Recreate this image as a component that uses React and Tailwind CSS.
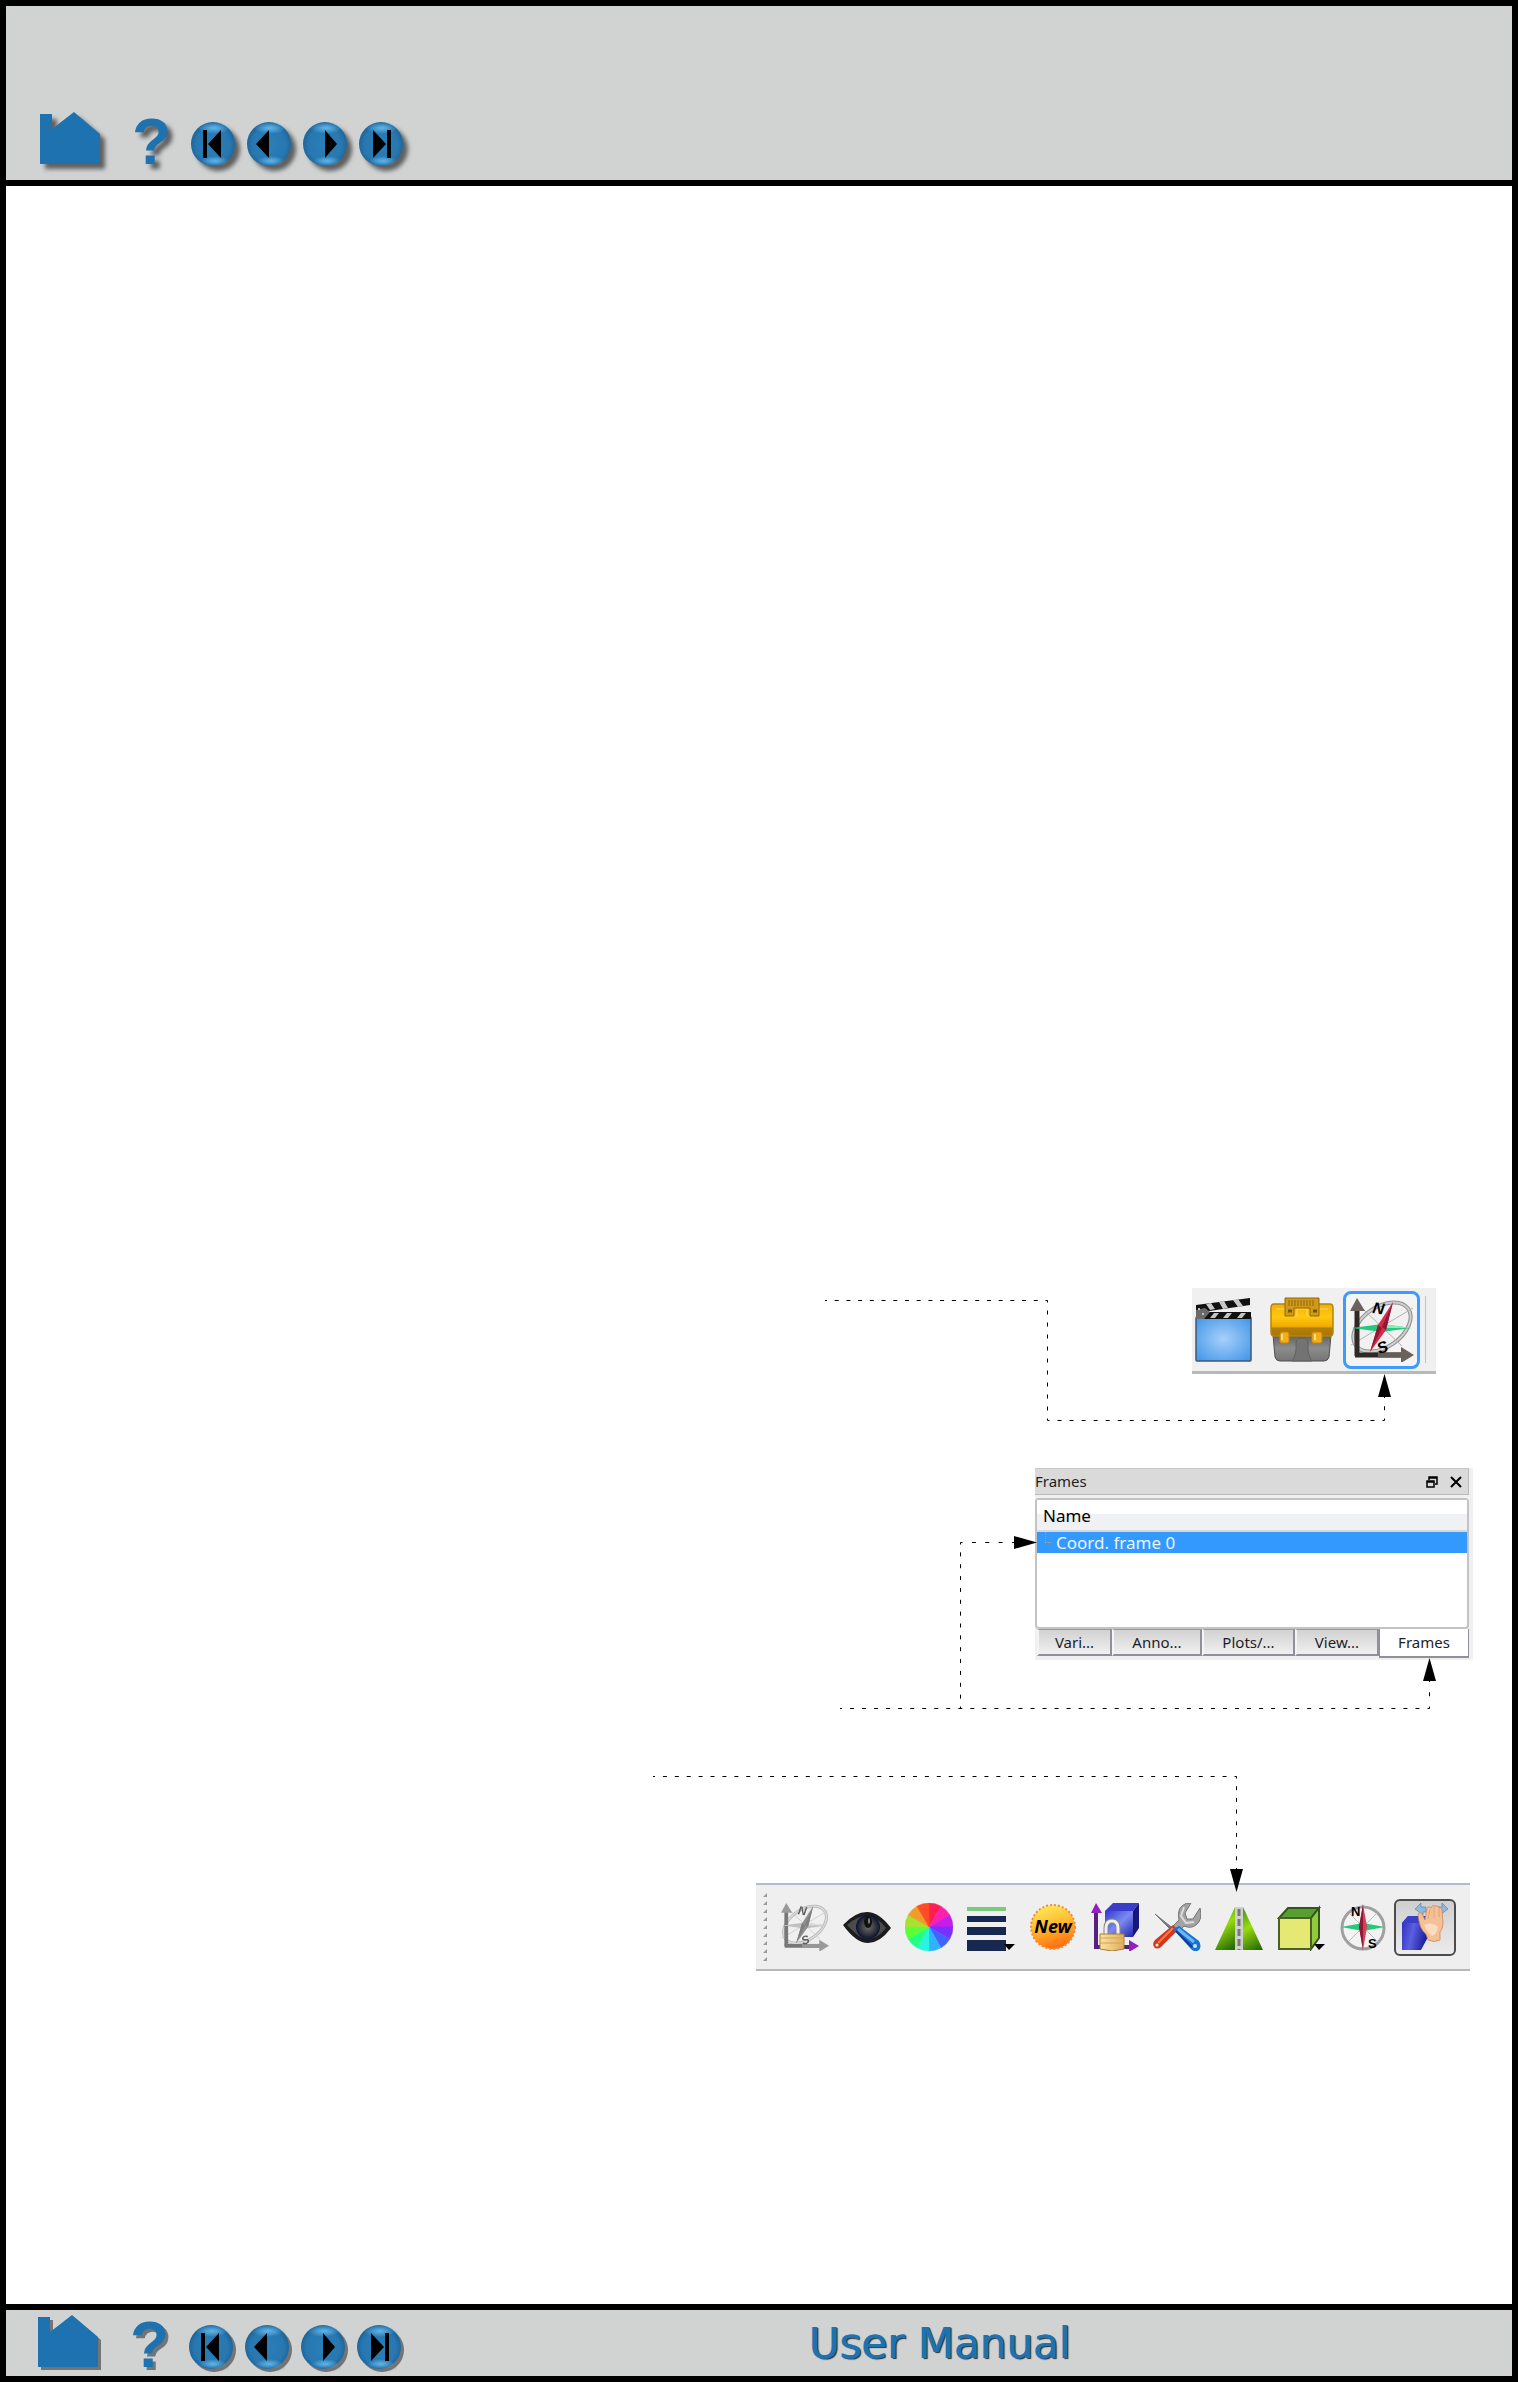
import React from 'react';

const HomeIcon = () => (
    <svg viewBox="0 0 60 52" className="w-[60px] h-[52px]">
        <path d="M0 2h12v15L34 0l26 22v30H0z" fill="#1f72b0" />
    </svg>
);

const glyphs = {
    first: <><path d="M12 9h4v28h-4z" /><path d="M30 9v28L17 23z" /></>,
    previous: <path d="M22 9v28L9 23z" />,
    next: <path d="M22 9v28l12-14z" />,
    last: <><path d="M14 9v28l13-14z" /><path d="M28 9h4v28h-4z" /></>,
};

const RoundIcon = ({ id, name }) => (
    <svg viewBox="0 0 44 44" className="w-11 h-11">
        <defs>
            <radialGradient id={id} cx="0.5" cy="0.52" r="0.55">
                <stop offset="0" stopColor="#2a7fb8" />
                <stop offset="0.7" stopColor="#2877b0" />
                <stop offset="1" stopColor="#1a5f94" />
            </radialGradient>
            <radialGradient id={`${id}-shine`}>
                <stop offset="0" stopColor="#63b6e8" />
                <stop offset="1" stopColor="#63b6e8" stopOpacity="0" />
            </radialGradient>
        </defs>
        <circle cx="22" cy="22" r="22" fill={`url(#${id})`} />
        <ellipse cx="23" cy="6" rx="16" ry="6" fill={`url(#${id}-shine)`} />
        <ellipse cx="24" cy="39" rx="14" ry="5" fill={`url(#${id}-shine)`} />
        <g transform="translate(0 -1)">{glyphs[name]}</g>
    </svg>
);

const PageNav = ({ id, shadow }) => (
    <nav aria-label={`${id} navigation`} className="flex items-end">
        <a href="#home" aria-label="Home" className={`mb-0.5 ${shadow}`}><HomeIcon /></a>
        <a href="#help" aria-label="Help" className={`ml-8 w-[59px] h-[52px] font-['Liberation_Sans',sans-serif] font-bold text-[64px] leading-[56px] text-[#1f72b0] ${shadow}`}>?</a>
        <div className="flex gap-3">
            {Object.keys(glyphs).map((name) => (
                <a key={name} href={`#${name}`} aria-label={`${name} page`} className={shadow}>
                    <RoundIcon id={`${id}-${name}`} name={name} />
                </a>
            ))}
        </div>
    </nav>
);

const ClapperIcon = () => (
    <svg viewBox="0 0 57 65" className="w-[57px] h-[65px]">
        <defs>
            <radialGradient id="clapper-body" cx="0.5" cy="0.5" r="0.65">
                <stop offset="0" stopColor="#a6d0fa" />
                <stop offset="1" stopColor="#4798e8" />
            </radialGradient>
        </defs>
        <rect x="1" y="20" width="55" height="44" rx="1" fill="url(#clapper-body)" stroke="#3c5878" strokeWidth="1.5" />
        <path d="M1 8L55 1v7L1 16z" fill="#111" />
        <path d="M11 7l5-1 4 6-5 1zM24 5l5-1 4 7-5 1zM38 3l5-1 5 7-5 1z" fill="#c8c8c8" />
        <path d="M1 15h55v7H1z" fill="#111" />
        <path d="M1 13l9-2 5 4-6 7H1z" fill="#6a6a6a" />
        <path d="M19 16h5l-4 5h-5zM32 16h5l-4 5h-5zM46 16h5l-4 5h-5z" fill="#c4c4c4" />
        <circle cx="4" cy="12" r="1" fill="#eee" />
        <circle cx="8" cy="17" r="1" fill="#ddd" />
    </svg>
);

const ToolboxIcon = () => (
    <svg viewBox="0 0 64 65" className="w-16 h-[65px]">
        <defs>
            <linearGradient id="toolbox-lid" x2="0" y2="1">
                <stop offset="0" stopColor="#f0b008" />
                <stop offset="0.4" stopColor="#ffc812" />
                <stop offset="0.7" stopColor="#f2ac00" />
                <stop offset="0.75" stopColor="#b47f05" />
                <stop offset="1" stopColor="#a87704" />
            </linearGradient>
            <linearGradient id="toolbox-base" x2="0" y2="1">
                <stop offset="0" stopColor="#5f5f5f" />
                <stop offset="0.5" stopColor="#8c8c8c" />
                <stop offset="1" stopColor="#757575" />
            </linearGradient>
        </defs>
        <path d="M3 38h58l-2 22q-1 4-5 4H10q-4 0-5-4z" fill="url(#toolbox-base)" stroke="#4f4f4f" />
        <path d="M22 64q5-6 4-18 0-5 6-5t6 5q-1 12 4 18z" fill="#737373" stroke="#606060" />
        <path d="M4 7h56q3 0 3 4v24q0 4-3 4H4q-3 0-3-4V11q0-4 3-4z" fill="url(#toolbox-lid)" stroke="#b88308" strokeWidth="1.5" />
        <path d="M6 12h13v7h8v-7h10v7h8v-7h13" fill="none" stroke="#ffd95a" strokeWidth="1" />
        <path d="M15 1h34v18h-9v-8H24v8h-9z" fill="#d09a18" stroke="#936609" />
        <path d="M19 3v6M22 3v6M25 3v6M28 3v6M31 3v6M34 3v6M37 3v6M40 3v6M43 3v6" stroke="#8a6412" strokeWidth="1" />
        <path d="M18 14h4M43 14h4" stroke="#765207" strokeWidth="3" />
        <rect x="10" y="35" width="9" height="11" rx="2" fill="#f4ad18" stroke="#c98706" />
        <rect x="42" y="35" width="10" height="11" rx="2" fill="#f4ad18" stroke="#c98706" />
        <path d="M12 37v6M45 37v6" stroke="#ffe08a" strokeWidth="2" />
    </svg>
);

const CoordFrameIcon = ({ className }) => (
    <svg viewBox="0 0 64 64" className={className}>
        <g transform="rotate(-35 32 29)">
            <ellipse cx="32" cy="29" rx="32" ry="20" fill="#f1f1f1" stroke="#8f8f8f" strokeWidth="4" />
            <ellipse cx="32" cy="29" rx="32" ry="20" fill="none" stroke="#cfcfcf" strokeWidth="2" />
        </g>
        <path d="M1 47L63 10M14 12l38 36" stroke="#b2b2b2" />
        <path d="M7 58V10" stroke="#2e2926" strokeWidth="5" />
        <path d="M7 0l8 13H0z" fill="#6a625b" />
        <path d="M5 57h50" stroke="#2e2926" strokeWidth="5" />
        <path d="M28 57h24" stroke="#665d56" strokeWidth="5" />
        <path d="M64 57L51 49v16z" fill="#6a625b" />
        <path d="M2 30l30-4 29 4-29 4z" fill="#25c97c" />
        <path d="M32 26l29 4H32z" fill="#8deab9" />
        <path d="M43 4L28 27l-8 27 16-22z" fill="#d62a4e" />
        <path d="M43 4l-7 28-4-3zM20 54l8-27 4 3z" fill="#8f1a34" />
        <text x="23" y="16" fontFamily="Liberation Sans, sans-serif" fontSize="16" fontWeight="bold" fontStyle="italic" transform="rotate(8 30 9)">N</text>
        <text x="27" y="55" fontFamily="Liberation Sans, sans-serif" fontSize="16" fontWeight="bold" fontStyle="italic" transform="rotate(-20 32 49)">S</text>
    </svg>
);

const EyeIcon = () => (
    <svg viewBox="0 0 48 48" className="w-12 h-12">
        <defs>
            <radialGradient id="eye-iris">
                <stop offset="0" stopColor="#6d6d70" />
                <stop offset="0.65" stopColor="#34343a" />
                <stop offset="1" stopColor="#08123c" />
            </radialGradient>
        </defs>
        <path d="M0 22Q12 9 24 9t24 16Q37 40 25 40T0 22z" fill="#1c1c1c" />
        <path d="M4 22Q14 13 24 13t19 12Q34 36 25 36T4 22z" fill="#4b4b4b" />
        <circle cx="25" cy="24" r="12" fill="url(#eye-iris)" />
        <ellipse cx="25" cy="19" rx="4" ry="6" fill="#111" />
        <ellipse cx="26" cy="18" rx="1" ry="3" fill="#8a8a8a" />
    </svg>
);

const wheelColors = ['#ff1f50', '#ff20b0', '#c41fe8', '#7a2fff', '#4163ff', '#30b2ff', '#27f5e0', '#22ff86', '#5cff36', '#a8e230', '#ef9c2a', '#ff4c26'];

const ColorWheelIcon = () => (
    <svg viewBox="-24 -24 48 48" className="w-12 h-12">
        {wheelColors.map((color, i) => (
            <path key={color} d="M0 0V-24A24 24 0 0 1 12 -20.8z" fill={color} stroke={color} strokeWidth="0.5" transform={`rotate(${i * 30})`} />
        ))}
    </svg>
);

const LinesIcon = () => (
    <svg viewBox="0 0 48 48" className="w-12 h-12">
        <path d="M0 4h39v4H0z" fill="#7ccb7c" />
        <path d="M0 13h39v6H0zM0 24h39v8H0zM0 37h39v11H0z" fill="#172850" />
        <path d="M37 41h11l-6 6z" />
    </svg>
);

const NewIcon = () => (
    <svg viewBox="0 0 48 48" className="w-12 h-12">
        <defs>
            <linearGradient id="new-badge" x1="0.3" y1="0" x2="0.6" y2="1">
                <stop offset="0" stopColor="#ffec5a" />
                <stop offset="0.5" stopColor="#ffb52c" />
                <stop offset="1" stopColor="#ff6a10" />
            </linearGradient>
        </defs>
        <circle cx="24" cy="24" r="22" fill="url(#new-badge)" stroke="#f38a34" strokeWidth="2" strokeDasharray="2 2" />
        <text x="24" y="30" textAnchor="middle" fontFamily="Noto Sans, sans-serif" fontSize="18" fontWeight="bold" fontStyle="italic">New</text>
    </svg>
);

const LockIcon = () => (
    <svg viewBox="0 0 48 48" className="w-12 h-12">
        <defs>
            <linearGradient id="lock-cube" x2="1" y2="1">
                <stop offset="0" stopColor="#3438d0" />
                <stop offset="0.5" stopColor="#7c8af2" />
                <stop offset="1" stopColor="#2325a8" />
            </linearGradient>
            <linearGradient id="lock-body">
                <stop offset="0" stopColor="#fbe3a2" />
                <stop offset="1" stopColor="#dfae55" />
            </linearGradient>
        </defs>
        <path d="M5 46V8M3 44h38" stroke="#56207e" strokeWidth="4" />
        <path d="M5 0l6 10H0zM48 43l-10-6v12z" fill="#941fc0" />
        <path d="M14 8l8-8h26l-6 8v26H14z" fill="#3a3dca" />
        <path d="M14 8h28v26H14z" fill="url(#lock-cube)" />
        <path d="M42 8l6-8v25l-6 9z" fill="#15177c" />
        <path d="M15 31v-6q0-7 6-7t6 7v6" fill="none" stroke="#858585" strokeWidth="5" />
        <path d="M15 31v-6q0-7 6-7t6 7v6" fill="none" stroke="#efefef" strokeWidth="3" />
        <path d="M9 31h24v15l-12 2-12-2z" fill="url(#lock-body)" stroke="#a87c38" />
        <path d="M9 35h24M9 40h24" stroke="#d2a456" />
    </svg>
);

const ToolsIcon = () => (
    <svg viewBox="0 0 48 48" className="w-12 h-12">
        <path d="M2 11l20 16-2 2z" fill="#777" stroke="#777" />
        <path d="M19 24l7-7q-2-10 3-14 4-4 9-3l-6 10 2 6 6 0 7-11q3 12-4 17-5 4-12 1l-6 7z" fill="#a3a3a3" stroke="#747474" />
        <path d="M31 4l-3 9 5 7 8-1" fill="none" stroke="#dcdcdc" strokeWidth="2" />
        <path d="M20 22l5 5L8 44q-4 3-7 0-2-4 1-7z" fill="#d2361b" />
        <path d="M20 25L5 40" stroke="#f27b52" strokeWidth="2" />
        <circle cx="4" cy="42" r="1.5" fill="#eee" />
        <path d="M20 26l6-3 20 15q3 5 0 9-4 3-8-1z" fill="#1574d2" />
        <path d="M25 26l16 13" stroke="#6db5f5" strokeWidth="3" />
        <path d="M23 28l16 16" stroke="#0c3c98" strokeWidth="2" />
        <circle cx="42" cy="43" r="2" fill="#cde5fb" />
    </svg>
);

const RoadIcon = () => (
    <svg viewBox="0 0 48 48" className="w-12 h-12">
        <defs>
            <linearGradient id="road-green" x1="0.4" x2="0.7" y2="1">
                <stop offset="0" stopColor="#4fa010" />
                <stop offset="0.4" stopColor="#98dc0c" />
                <stop offset="1" stopColor="#2c6d0a" />
            </linearGradient>
        </defs>
        <path d="M20 4v43H0z" fill="url(#road-green)" />
        <path d="M28 4v43h20z" fill="url(#road-green)" />
        <path d="M20 4h8v43h-8z" fill="#cfcfcf" />
        <path d="M24 6v41" stroke="#777" strokeWidth="3" strokeDasharray="7 3" />
    </svg>
);

const CubeIcon = () => (
    <svg viewBox="0 0 48 48" className="w-12 h-12">
        <path d="M2 15L11 5h31L34 15z" fill="#57a030" stroke="#33551b" strokeWidth="2" />
        <path d="M34 15l8-10v30l-8 11z" fill="#91cb3b" stroke="#33551b" strokeWidth="2" />
        <path d="M2 15h32v31H2z" fill="#e5e872" stroke="#4c5f28" strokeWidth="2" />
        <path d="M37 41h11l-6 6z" />
    </svg>
);

const CompassIcon = () => (
    <svg viewBox="0 0 48 48" className="w-12 h-12">
        <circle cx="24" cy="25" r="21" fill="#f3f3f3" stroke="#a0a0a0" strokeWidth="3" />
        <path d="M10 10l28 28M38 10L10 38" stroke="#bdbdbd" />
        <path d="M2 24l22-4 22 4-22 4z" fill="#25c97c" />
        <path d="M24 1l4 23-4 23-4-23z" fill="#e0395c" />
        <path d="M24 1v46l-4-23z" fill="#8c1b36" />
        <text x="12" y="13" fontFamily="Liberation Sans, sans-serif" fontSize="13" fontWeight="bold">N</text>
        <text x="29" y="45" fontFamily="Liberation Sans, sans-serif" fontSize="13" fontWeight="bold">S</text>
    </svg>
);

const HandIcon = () => (
    <svg viewBox="0 0 48 48" className="w-12 h-12">
        <defs>
            <linearGradient id="hand-cube" x2="1" y2="0.3">
                <stop offset="0" stopColor="#2a2cc0" />
                <stop offset="0.5" stopColor="#5a60e0" />
                <stop offset="1" stopColor="#2022a0" />
            </linearGradient>
        </defs>
        <path d="M1 20l6-7h20v21l-7 13H1z" fill="url(#hand-cube)" />
        <path d="M1 20l6-7h20l-5 7z" fill="#3a3fc8" />
        <path d="M14 6l6-6v4h5v5h-3v3zM47 6l-6-6v4h-5v5h3v3z" fill="#8db9de" stroke="#5585b5" strokeWidth="0.7" />
        <path d="M18 18l-1-7q2-3 4 0l3 6 2-12q2-3 4 0 1-4 4-2 3-1 4 2 3-1 3 3l1 12q0 6-3 9v8q-6 3-12 0-1-6-5-9-3-4-4-10z" fill="#f5c096" stroke="#cc8a5a" strokeWidth="0.8" />
        <path d="M29 6l-2 10M33 4v11M38 6v8" stroke="#d79e70" strokeWidth="0.8" />
        <path d="M23 22q8-4 14 2-1 7-6 9-5-4-8-11z" fill="#fbdcc0" />
    </svg>
);

const ToolButton = ({ label, children }) => (
    <button type="button" aria-label={label} className="w-[62px] h-[58px] flex items-center justify-center">{children}</button>
);

const ModeToolbar = () => (
    <div role="toolbar" aria-label="Modes" className="w-[244px] h-[86px] mr-[37px] pl-[3px] flex items-center bg-[#f0f0f0] border-b-3 border-[#b8b8b8]">
        <button type="button" aria-label="Animation"><ClapperIcon /></button>
        <button type="button" aria-label="Toolbox" className="ml-[18px]"><ToolboxIcon /></button>
        <button type="button" aria-label="Coordinate frames" className="ml-[9px] w-[77px] h-[78px] flex items-center justify-center rounded-lg border-3 border-[#3d9bff] bg-[#f4f4f4]">
            <CoordFrameIcon className="w-16 h-16" />
        </button>
        <div className="ml-[5px] w-px h-[67px] bg-[#c4c4c4]" />
    </div>
);

const tabs = [
    { label: 'Vari...', width: 'w-[75px]' },
    { label: 'Anno...', width: 'w-[90px]' },
    { label: 'Plots/...', width: 'w-[93px]' },
    { label: 'View...', width: 'w-[84px]' },
];

const FramesPanel = () => (
    <section aria-label="Frames" className="w-[438px] mt-[94px] pr-1 pb-0.5 bg-[#f0f0f0] text-[15px] text-[#1e1e28]">
        <div className="h-[27px] flex items-center border-t border-b border-r border-t-[#c8c8c8] border-[#bababa] bg-[#dadada]">
            <h2 className="mr-auto">Frames</h2>
            <button type="button" aria-label="Float panel" className="mr-3">
                <svg viewBox="0 0 12 12" className="w-3 h-3" fill="none" stroke="#000" strokeWidth="1.5">
                    <path d="M3 4V1h8v7H9M3 2h8M1 5h7v6H1zM1 6h7" />
                </svg>
            </button>
            <button type="button" aria-label="Close panel" className="mr-1.5">
                <svg viewBox="0 0 12 12" className="w-3 h-3" stroke="#000" strokeWidth="2">
                    <path d="M1 1l10 10M11 1L1 11" />
                </svg>
            </button>
        </div>
        <div className="mt-[3px] h-[131px] border-2 border-[#c3c3c3] rounded-sm bg-white">
            <table className="w-full text-[17px] leading-[21px] border-separate border-spacing-0">
                <thead>
                    <tr>
                        <th className="h-8 pl-[6px] py-0 text-left font-normal text-black border-b-2 border-[#d8d8d8] bg-linear-to-b from-white from-45% to-[#eff1f4] to-46%">Name</th>
                    </tr>
                </thead>
                <tbody>
                    <tr>
                        <td className="p-0 bg-[#3399ff] text-[#eaf4ff]">
                            <div className="flex">
                                <span className="ml-2 mr-[5px] w-[6px] h-[11px] border-l border-b border-dotted border-[#9aa7b5]" />
                                Coord. frame 0
                            </div>
                        </td>
                    </tr>
                </tbody>
            </table>
        </div>
        <div role="tablist" className="flex pl-0.5">
            {tabs.map((tab) => (
                <button key={tab.label} type="button" role="tab" aria-selected="false" className={`${tab.width} h-[27px] border-2 border-t border-l-[#f4f4f4] border-t-[#9a9a9a] border-[#8e909c] bg-linear-to-b from-[#d2d2d2] to-[#f0f0f0]`}>
                    {tab.label}
                </button>
            ))}
            <button type="button" role="tab" aria-selected="true" className="flex-1 h-[29px] border border-t-0 border-b-2 border-[#8e909c] bg-white">Frames</button>
        </div>
    </section>
);

const FrameToolbar = () => (
    <div role="toolbar" aria-label="Frame tools" className="w-[714px] h-[88px] mt-[223px] mr-[3px] pl-[7px] flex items-center bg-[#efefef] border-t-2 border-b-2 border-t-[#b4bccb] border-[#b8b8b8]">
        <div className="mr-[7px] flex flex-col gap-1">
            {Array.from({ length: 9 }, (_, i) => (
                <svg key={i} viewBox="0 0 4 4" className="w-1 h-1"><path d="M4 0v4H0z" fill="#9a9a9a" /></svg>
            ))}
        </div>
        <ToolButton label="Coordinate frame"><CoordFrameIcon className="w-12 h-12 grayscale opacity-60" /></ToolButton>
        <ToolButton label="Visibility"><EyeIcon /></ToolButton>
        <ToolButton label="Color"><ColorWheelIcon /></ToolButton>
        <ToolButton label="Line width"><LinesIcon /></ToolButton>
        <ToolButton label="New"><NewIcon /></ToolButton>
        <ToolButton label="Lock"><LockIcon /></ToolButton>
        <ToolButton label="Settings"><ToolsIcon /></ToolButton>
        <ToolButton label="Align"><RoadIcon /></ToolButton>
        <ToolButton label="View"><CubeIcon /></ToolButton>
        <ToolButton label="Compass"><CompassIcon /></ToolButton>
        <button type="button" aria-label="Move" aria-pressed="true" className="w-[62px] h-[57px] flex items-center justify-center rounded-md border-2 border-[#4c4c4c] bg-linear-to-b from-[#cfcfcf] to-[#ececec]">
            <HandIcon />
        </button>
    </div>
);

// Dashes are spread so that every segment starts and ends on half a dash.
const Dashed = ({ from, to }) => {
    const length = Math.abs(to[0] - from[0]) + Math.abs(to[1] - from[1]);
    const step = length / Math.round(length / 12);
    return <line x1={from[0]} y1={from[1]} x2={to[0]} y2={to[1]} strokeDasharray={`4 ${step - 4}`} strokeDashoffset="2" />;
};

const leaders = [
    [[212, 12.5], [434.5, 12.5], [434.5, 132.5], [771.5, 132.5], [771.5, 108]],
    [[227, 420.5], [816.5, 420.5], [816.5, 392]],
    [[347.5, 420.5], [347.5, 254.5], [401, 254.5]],
    [[40, 488.5], [623.5, 488.5], [623.5, 582]],
];

const Leaders = () => (
    <svg viewBox="0 0 860 683" className="absolute right-0 top-0 w-[860px] h-[683px] pointer-events-none" aria-hidden="true">
        <g stroke="#000">
            {leaders.map((points) => points.slice(1).map((to, i) => (
                <Dashed key={`${points[i]}-${to}`} from={points[i]} to={to} />
            )))}
        </g>
        <path d="M771.5 86l6.5 23h-13z" />
        <path d="M816.5 370l6.5 23h-13z" />
        <path d="M424 254.5l-23-6.5v13z" />
        <path d="M623.5 604l-6.5-23h13z" />
    </svg>
);

export default function App() {
    return (
        <div className="min-h-screen flex flex-col border-6 border-black bg-white font-['Noto_Sans',sans-serif]">
            <header className="h-[180px] pl-[34px] pb-[14px] flex items-end bg-[#d1d3d2] border-b-6 border-black">
                <PageNav id="top" shadow="drop-shadow-[5px_5px_2px_rgba(0,0,0,0.55)]" />
            </header>
            <main className="flex-1 flex flex-col justify-end pr-[39px] pb-[333px]">
                <div className="relative flex flex-col items-end">
                    <ModeToolbar />
                    <FramesPanel />
                    <FrameToolbar />
                    <Leaders />
                </div>
            </main>
            <footer className="h-[72px] pl-8 pb-[7px] flex items-end bg-[#d1d3d2] border-t-6 border-black">
                <div className="w-[52%]">
                    <PageNav id="bottom" shadow="drop-shadow-[3px_3px_0px_rgba(0,0,0,0.45)]" />
                </div>
                <p className="pl-1 font-['DejaVu_Sans',sans-serif] text-[42px] leading-[50px] text-[#1f72b0] [text-shadow:1px_0_0_#1f72b0,2px_1px_1px_#27333d]">User Manual</p>
            </footer>
        </div>
    );
}
